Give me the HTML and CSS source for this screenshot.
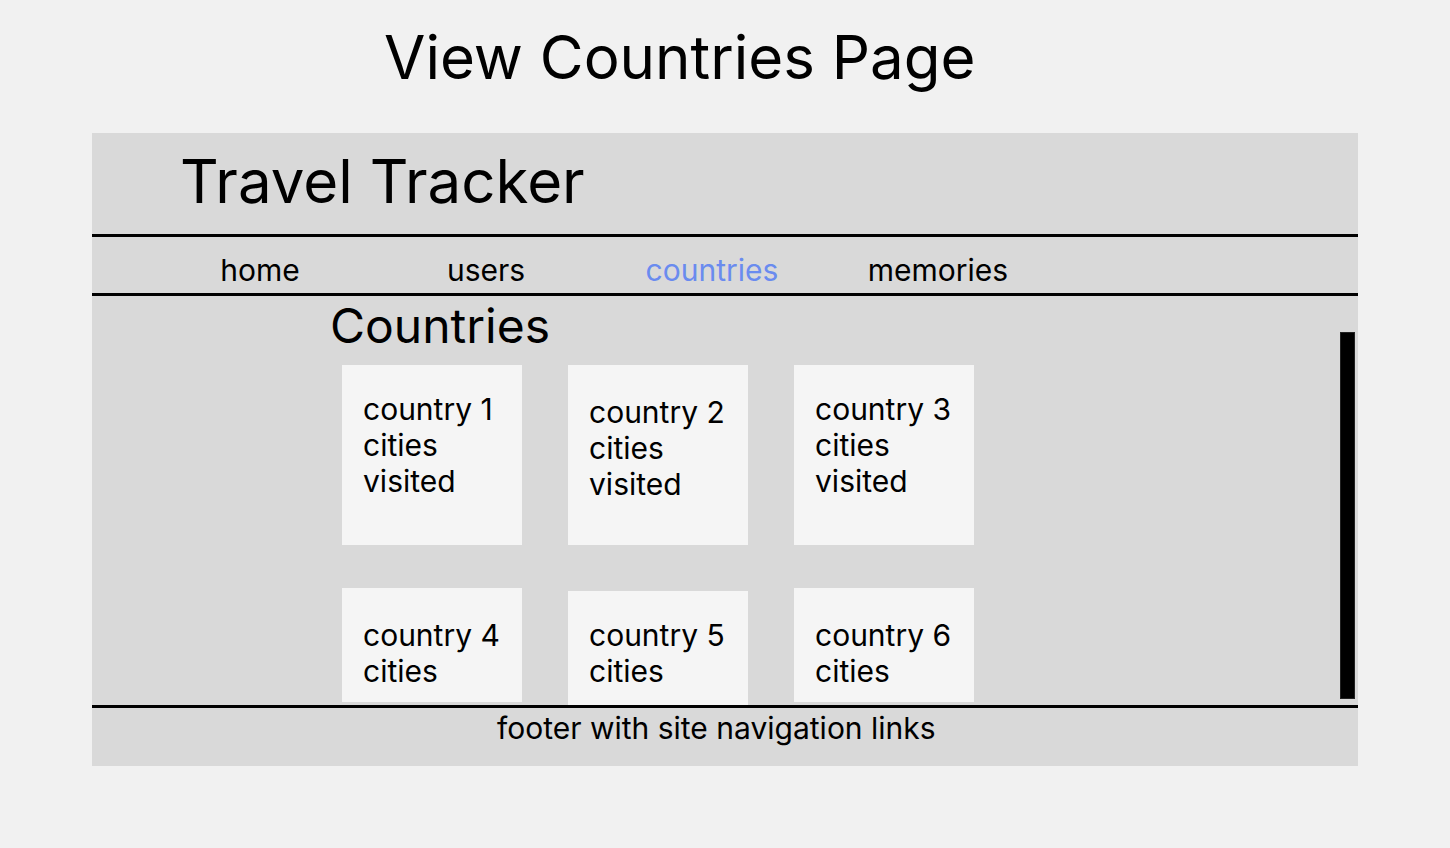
FILE: index.html
```html
<!DOCTYPE html>
<html lang="en">
<head>
<meta charset="utf-8">
<title>View Countries Page</title>
<link rel="stylesheet" href="styles.css">
</head>
<body>
<h1 class="page-title">View Countries Page</h1>
<div class="frame">
  <header class="site-header">
    <div class="brand">Travel Tracker</div>
  </header>
  <nav class="site-nav">
    <a class="nav-link">home</a>
    <a class="nav-link">users</a>
    <a class="nav-link active">countries</a>
    <a class="nav-link">memories</a>
  </nav>
  <div class="content">
    <main class="main">
      <h2 class="section-title">Countries</h2>
      <div class="cards">
        <div class="card">country 1<br>cities<br>visited</div>
        <div class="card shift-text">country 2<br>cities<br>visited</div>
        <div class="card">country 3<br>cities<br>visited</div>
        <div class="card short">country 4<br>cities</div>
        <div class="card short shift-card">country 5<br>cities</div>
        <div class="card short">country 6<br>cities</div>
      </div>
    </main>
    <div class="scrollbar"></div>
  </div>
  <footer class="site-footer">footer with site navigation links</footer>
</div>
</body>
</html>
```

FILE: styles.css
```css
* { box-sizing: border-box; }
html, body { margin: 0; padding: 0; }
body {
  background: #f1f1f1;
  font-family: Inter, "Noto Sans", sans-serif;
  color: #000;
  width: 1450px;
  height: 848px;
  overflow: hidden;
}
.page-title {
  margin: 0 0 46px 384px;
  padding-top: 27px;
  font-size: 60px;
  line-height: 60px;
  font-weight: 400;
}
.frame {
  margin-left: 92px;
  width: 1266px;
  background: #d9d9d9;
}
.site-header {
  height: 104px;
  padding: 18px 0 0 88px;
  border-bottom: 3px solid #000;
}
.brand {
  font-size: 60px;
  line-height: 60px;
}
.site-nav {
  display: flex;
  height: 59px;
  padding: 15px 0 0 55px;
  border-bottom: 3px solid #000;
}
.nav-link {
  width: 226px;
  text-align: center;
  font-size: 30px;
  line-height: 36px;
}
.nav-link.active { color: #6a8bef; }
.content {
  display: flex;
  height: 412px;
  overflow: hidden;
  border-bottom: 3px solid #000;
}
.main {
  flex: 1;
  padding: 6px 0 0 238px;
}
.section-title {
  margin: 0;
  font-size: 48px;
  line-height: 48px;
  font-weight: 400;
}
.cards {
  display: grid;
  grid-template-columns: repeat(3, 180px);
  column-gap: 46px;
  row-gap: 43px;
  align-items: start;
  margin: 15px 0 0 12px;
}
.card {
  height: 180px;
  background: #f5f5f5;
  padding: 26px 0 0 21px;
  font-size: 30px;
  line-height: 36px;
}
.card.shift-text { padding-top: 29px; }
.card.short {
  height: 114px;
  padding-top: 29px;
}
.card.short.shift-card {
  margin-top: 3px;
  padding-top: 26px;
}
.scrollbar {
  width: 15px;
  height: 367px;
  margin: 36px 3px 0 0;
  background: #000;
  border: 1px solid #222;
}
.site-footer {
  height: 58px;
  padding: 2px 0 0 405px;
  font-size: 30px;
  line-height: 36px;
}
```
